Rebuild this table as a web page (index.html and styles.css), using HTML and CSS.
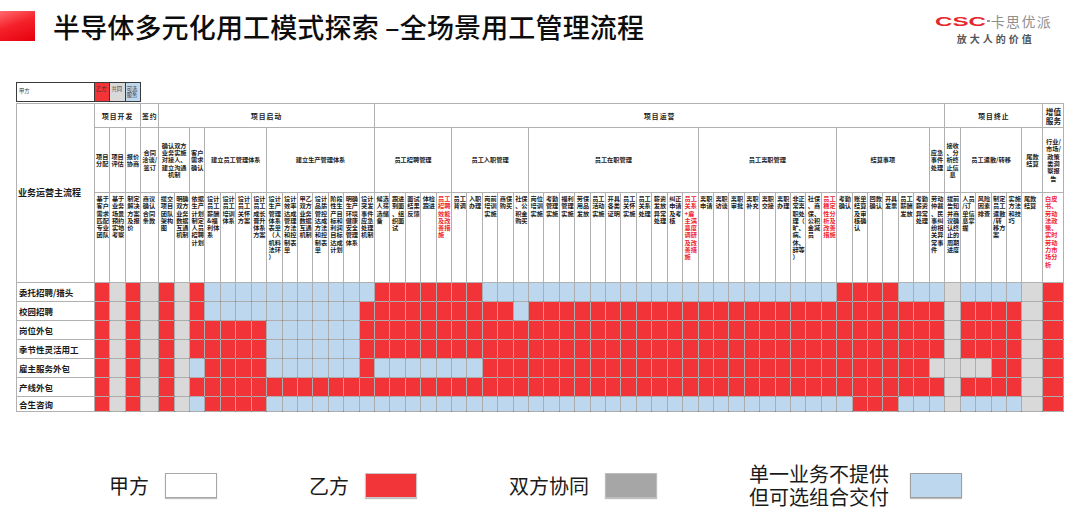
FILE: index.html
```html
<!DOCTYPE html>
<html lang="zh">
<head>
<meta charset="utf-8">
<title>半导体多元化用工模式探索 –全场景用工管理流程</title>
<link rel="stylesheet" href="styles.css">
</head>
<body>
<header class="top">
  <div class="mark"></div>
  <h1 class="title">半导体多元化用工模式探索 –全场景用工管理流程</h1>
  <div class="logo">
    <div class="logo-top">
      <svg class="csc" width="54" height="14" viewBox="0 0 54 14"><text x="0" y="12" textLength="51" lengthAdjust="spacingAndGlyphs">CSC</text></svg>
      <span class="dash"></span>
      <span class="brand">卡思优派</span>
    </div>
    <div class="slogan">放大人的价值</div>
  </div>
</header>

<table class="key">
  <colgroup><col class="k-w"><col class="k-n"><col class="k-n"><col class="k-n"></colgroup>
  <tr><td class="k-a">甲方</td><td class="r">乙方</td><td class="g">共同</td><td class="b">可选服务</td></tr>
</table>

<table class="flow">
  <colgroup>
    <col class="w-label">
    <col span="3" class="w-n">
    <col class="w-sign">
    <col span="56" class="w-n">
    <col span="2" class="w-end">
  </colgroup>
  <tr class="ph">
    <th rowspan="3" class="main">业务运营主流程</th>
    <th colspan="3">项目开发</th>
    <th>签约</th>
    <th colspan="14">项目启动</th>
    <th colspan="37" class="ops">项目运营</th>
    <th colspan="6">项目终止</th>
    <th class="vas">增值服务</th>
  </tr>
  <tr class="grp">
    <th>项目分配</th><th>项目评估</th><th>报价协商</th><th>合同洽谈/签订</th>
    <th colspan="2">确认双方业务实施对接人、建立沟通机制</th>
    <th>客户需求确认</th>
    <th colspan="4">建立员工管理体系</th>
    <th colspan="7">建立生产管理体系</th>
    <th colspan="5">员工招聘管理</th>
    <th colspan="5">员工入职管理</th>
    <th colspan="11">员工在职管理</th>
    <th colspan="9">员工离职管理</th>
    <th colspan="6">结算事项</th>
    <th>应急事件处理</th>
    <th>接收、分析终止信息</th>
    <th colspan="4">员工遣散/转移</th>
    <th>尾款结算</th>
    <th>行业/市场/政策类洞察报告</th>
  </tr>
  <tr class="act">
    <td>基于客户需求匹配专业团队</td>
    <td>基于业务场景预约实地考察</td>
    <td>制定解决方案及报价</td>
    <td>商议确认合同条款</td>
    <td>提交项目团队架构图</td>
    <td>明确双方业务数据互通机制</td>
    <td>依据生产计划制定人员招聘计划</td>
    <td>设计员工薪酬&amp;福利体系</td>
    <td>设计员工培训体系</td>
    <td>设计员工关怀方案</td>
    <td>设计员工成长晋升体系方案</td>
    <td>设计生产管理体系表单（人机料法环）</td>
    <td>设计效率达成管理方法和控制表单</td>
    <td>甲乙双方业务数据互通机制</td>
    <td>设计品质管控达成方法和控制表单</td>
    <td>阶段性生产目标和利润目标达成计划</td>
    <td>明确生产环境健康安全管理体系</td>
    <td>设计突发事件应急处理机制</td>
    <td>候选人筛选储备</td>
    <td>跟进到面、组织面试</td>
    <td>面试结果反馈</td>
    <td>体检跟进</td>
    <td class="hl">员工招聘效能及改善措施</td>
    <td>员工背调</td>
    <td>入职办理</td>
    <td>岗前培训实施</td>
    <td>商保购买</td>
    <td>社保、公积金购买</td>
    <td>岗位培训实施</td>
    <td>考勤管理实施</td>
    <td>福利管理实施</td>
    <td>劳保用品发放</td>
    <td>员工活动实施</td>
    <td>开具各类证明</td>
    <td>员工关怀实施</td>
    <td>员工关系处理</td>
    <td>薪资发放异常处理</td>
    <td>纠正申请及考核</td>
    <td class="hl">员工关系+雇主满意度调研及改善措施</td>
    <td>离职申请</td>
    <td>离职访谈</td>
    <td>离职审批</td>
    <td>离职补充</td>
    <td>离职交接</td>
    <td>离职办理</td>
    <td>非正常离职处理（旷、病、休、辞等）</td>
    <td>社保、商保、公积金减员</td>
    <td class="hl">员工稳定性分析及改善措施</td>
    <td>考勤确认</td>
    <td>账单结算及审核确认</td>
    <td>回款确认</td>
    <td>开具发票</td>
    <td>员工薪酬发放</td>
    <td>考勤薪资异常处理</td>
    <td>劳动仲裁、民事纠纷相关异常事件</td>
    <td>提前告知并商议确认终止的周期进度</td>
    <td>人员/订单信息掌握</td>
    <td>风险因素排查</td>
    <td>制定员工遣散/转移方案</td>
    <td>实施方法和技巧</td>
    <td>尾款结算</td>
    <td class="hl">白皮书、劳动法政策、实时劳动力市场分析</td>
  </tr>

  <tr class="data"><td class="lbl">委托招聘/猎头</td>
<td class=r></td><td class=g></td><td class=r></td><td class=g></td><td class=r></td><td class=g></td><td class=r></td>
<td class=b></td><td class=b></td><td class=b></td><td class=b></td><td class=b></td><td class=b></td><td class=b></td><td class=b></td><td class=b></td><td class=b></td><td class=b></td>
<td class=r></td><td class=r></td><td class=r></td><td class=r></td><td class=r></td><td class=r></td><td class=r></td>
<td class=b></td><td class=b></td><td class=b></td><td class=b></td><td class=b></td><td class=b></td><td class=b></td><td class=b></td><td class=b></td><td class=b></td>
<td class=b></td><td class=b></td><td class=b></td><td class=b></td><td class=b></td><td class=b></td><td class=b></td><td class=b></td><td class=b></td><td class=b></td>
<td class=b></td><td class=b></td><td class=b></td>
<td class=r></td><td class=r></td><td class=r></td><td class=r></td>
<td class=b></td><td class=b></td><td class=b></td>
<td class=g></td>
<td class=b></td><td class=b></td><td class=b></td><td class=b></td>
<td class=g></td>
<td class=r></td>
  </tr>

  <tr class="data"><td class="lbl">校园招聘</td>
<td class=r></td><td class=g></td><td class=r></td><td class=g></td><td class=r></td><td class=g></td><td class=r></td>
<td class=b></td><td class=b></td><td class=b></td><td class=b></td><td class=b></td><td class=b></td><td class=b></td><td class=b></td><td class=b></td><td class=b></td>
<td class=r></td><td class=r></td><td class=r></td><td class=r></td><td class=r></td><td class=r></td><td class=r></td><td class=r></td><td class=r></td><td class=r></td>
<td class=b></td>
<td class=r></td><td class=r></td><td class=r></td><td class=r></td><td class=r></td><td class=r></td><td class=r></td><td class=r></td><td class=r></td><td class=r></td>
<td class=r></td><td class=r></td><td class=r></td><td class=r></td><td class=r></td><td class=r></td><td class=r></td><td class=r></td><td class=r></td><td class=r></td>
<td class=r></td><td class=r></td><td class=r></td><td class=r></td><td class=r></td><td class=r></td><td class=r></td>
<td class=g></td>
<td class=r></td><td class=r></td><td class=r></td><td class=r></td>
<td class=g></td>
<td class=r></td>
  </tr>

  <tr class="data"><td class="lbl">岗位外包</td>
<td class=r></td><td class=g></td><td class=r></td><td class=g></td><td class=r></td><td class=g></td><td class=r></td>
<td class=r></td><td class=r></td><td class=r></td><td class=r></td>
<td class=b></td><td class=b></td><td class=b></td><td class=b></td><td class=b></td><td class=b></td>
<td class=r></td><td class=r></td><td class=r></td><td class=r></td><td class=r></td><td class=r></td><td class=r></td><td class=r></td><td class=r></td><td class=r></td>
<td class=r></td><td class=r></td><td class=r></td><td class=r></td><td class=r></td><td class=r></td><td class=r></td><td class=r></td><td class=r></td><td class=r></td>
<td class=r></td><td class=r></td><td class=r></td><td class=r></td><td class=r></td><td class=r></td><td class=r></td><td class=r></td><td class=r></td><td class=r></td>
<td class=r></td><td class=r></td><td class=r></td><td class=r></td><td class=r></td><td class=r></td><td class=r></td><td class=r></td>
<td class=g></td>
<td class=r></td><td class=r></td><td class=r></td><td class=r></td>
<td class=g></td>
<td class=r></td>
  </tr>

  <tr class="data"><td class="lbl">季节性灵活用工</td>
<td class=r></td><td class=g></td><td class=r></td><td class=g></td><td class=r></td><td class=g></td><td class=r></td>
<td class=r></td><td class=r></td><td class=r></td><td class=r></td>
<td class=b></td><td class=b></td><td class=b></td><td class=b></td><td class=b></td><td class=b></td>
<td class=r></td><td class=r></td><td class=r></td><td class=r></td><td class=r></td><td class=r></td><td class=r></td><td class=r></td><td class=r></td><td class=r></td>
<td class=r></td><td class=r></td><td class=r></td><td class=r></td><td class=r></td><td class=r></td><td class=r></td><td class=r></td><td class=r></td><td class=r></td>
<td class=r></td><td class=r></td><td class=r></td><td class=r></td><td class=r></td><td class=r></td><td class=r></td><td class=r></td><td class=r></td><td class=r></td>
<td class=r></td><td class=r></td><td class=r></td><td class=r></td><td class=r></td><td class=r></td><td class=r></td><td class=r></td>
<td class=g></td>
<td class=r></td><td class=r></td><td class=r></td><td class=r></td>
<td class=g></td>
<td class=r></td>
  </tr>

  <tr class="data"><td class="lbl">雇主服务外包</td>
<td class=r></td><td class=g></td><td class=r></td><td class=g></td><td class=r></td><td class=g></td>
<td class=b></td>
<td class=r></td><td class=r></td><td class=r></td><td class=r></td>
<td class=b></td><td class=b></td><td class=b></td><td class=b></td><td class=b></td><td class=b></td>
<td class=r></td>
<td class=b></td><td class=b></td><td class=b></td><td class=b></td><td class=b></td><td class=b></td><td class=b></td>
<td class=r></td><td class=r></td><td class=r></td><td class=r></td><td class=r></td><td class=r></td><td class=r></td><td class=r></td><td class=r></td><td class=r></td>
<td class=r></td><td class=r></td><td class=r></td><td class=r></td><td class=r></td><td class=r></td><td class=r></td><td class=r></td><td class=r></td><td class=r></td>
<td class=r></td><td class=r></td><td class=r></td><td class=r></td><td class=r></td><td class=r></td><td class=r></td><td class=r></td><td class=r></td>
<td class=g></td><td class=g></td><td class=g></td><td class=g></td>
<td class=r></td><td class=r></td>
<td class=g></td>
<td class=r></td>
  </tr>

  <tr class="data"><td class="lbl">产线外包</td>
<td class=r></td><td class=g></td><td class=r></td><td class=g></td><td class=r></td><td class=g></td>
<td class=r></td><td class=r></td><td class=r></td><td class=r></td><td class=r></td><td class=r></td><td class=r></td><td class=r></td><td class=r></td><td class=r></td>
<td class=r></td><td class=r></td><td class=r></td><td class=r></td><td class=r></td><td class=r></td><td class=r></td><td class=r></td><td class=r></td><td class=r></td>
<td class=r></td><td class=r></td><td class=r></td><td class=r></td><td class=r></td><td class=r></td><td class=r></td><td class=r></td><td class=r></td><td class=r></td>
<td class=r></td><td class=r></td><td class=r></td><td class=r></td><td class=r></td><td class=r></td><td class=r></td><td class=r></td><td class=r></td><td class=r></td>
<td class=r></td><td class=r></td><td class=r></td><td class=r></td><td class=r></td><td class=r></td><td class=r></td><td class=r></td><td class=r></td>
<td class=g></td>
<td class=r></td><td class=r></td><td class=r></td><td class=r></td>
<td class=g></td>
<td class=r></td>
  </tr>

  <tr class="data last"><td class="lbl">合生咨询</td>
<td class=r></td><td class=g></td><td class=r></td><td class=g></td><td class=r></td><td class=g></td>
<td class=b></td>
<td class=r></td><td class=r></td><td class=r></td><td class=r></td>
<td class=b></td><td class=b></td><td class=b></td><td class=b></td><td class=b></td><td class=b></td><td class=b></td><td class=b></td><td class=b></td><td class=b></td>
<td class=b></td><td class=b></td><td class=b></td><td class=b></td><td class=b></td><td class=b></td><td class=b></td><td class=b></td><td class=b></td><td class=b></td>
<td class=b></td><td class=b></td><td class=b></td><td class=b></td><td class=b></td><td class=b></td><td class=b></td><td class=b></td><td class=b></td><td class=b></td>
<td class=b></td><td class=b></td><td class=b></td><td class=b></td><td class=b></td><td class=b></td><td class=b></td><td class=b></td>
<td class=r></td><td class=r></td><td class=r></td>
<td class=b></td><td class=b></td><td class=b></td>
<td class=g></td>
<td class=b></td><td class=b></td><td class=b></td><td class=b></td>
<td class=g></td>
<td class=r></td>
  </tr>
</table>

<div class="legend">
  <div class="item"><span class="lt">甲方</span><i class="sw sw-white"></i></div>
  <div class="item"><span class="lt">乙方</span><i class="sw sw-red"></i></div>
  <div class="item"><span class="lt">双方协同</span><i class="sw sw-gray"></i></div>
  <div class="item item-wide">
    <div class="lt-two"><span class="lt">单一业务不提供</span><span class="lt">但可选组合交付</span></div>
    <i class="sw sw-blue"></i>
  </div>
</div>
</body>
</html>
```
FILE: styles.css
```css
* { box-sizing: border-box; margin: 0; padding: 0; }

body {
  width: 1080px;
  height: 522px;
  overflow: hidden;
  background: #fff;
  font-family: "Noto Sans CJK SC", "Noto Sans", sans-serif;
  color: #111;
}

/* ---------- header ---------- */
.top {
  display: flex;
  align-items: flex-start;
  height: 82px;
  padding-top: 11px;
}
.mark {
  width: 35px;
  height: 30px;
  background: linear-gradient(160deg, #ff6a6e 0%, #f5212a 45%, #e4000c 100%);
}
.title {
  margin-left: 18px;
  font-size: 27px;
  line-height: 31px;
  font-weight: 500;
  color: #0d0d0d;
  letter-spacing: 0.15px;
}
.logo {
  margin-left: auto;
  margin-right: 28px;
  margin-top: 2px;
  display: flex;
  flex-direction: column;
  align-items: flex-start;
}
.logo-top {
  display: flex;
  align-items: center;
  height: 16px;
}
.csc { display: block; }
.csc text {
  font-family: "Liberation Sans", Arial, sans-serif;
  font-weight: 700;
  font-size: 13px;
  fill: #e5262d;
}
.dash {
  width: 3px;
  height: 2px;
  background: #9a9a9a;
  margin: 0 1px 0 -2px;
}
.brand {
  font-size: 14px;
  line-height: 16px;
  color: #8f8f8f;
  letter-spacing: 1.3px;
}
.slogan {
  margin-top: 4px;
  margin-left: 22px;
  font-size: 10px;
  line-height: 11px;
  color: #555;
  letter-spacing: 3px;
  font-weight: 700;
}

/* ---------- key row ---------- */
.key {
  margin-left: 16px;
  border-collapse: collapse;
  table-layout: fixed;
  width: 124px;
}
.k-w { width: 78px; }
.k-n { width: 15.4px; }
.key td {
  height: 19px;
  border: 1px solid #3a3a3a;
  font-size: 5.3px;
  line-height: 6px;
  vertical-align: top;
  padding: 3px 0 0 1px;
  color: #333;
}
.key .k-a { padding: 5px 0 0 2px; }

/* ---------- flow table ---------- */
.flow {
  margin: 1px 0 0 16px;
  width: 1047px;
  table-layout: fixed;
  border-collapse: collapse;
  color: #1b1b1b;
  font-weight: 700;
  border: 1px solid #8e8e8e;
}
.w-label { width: 78px; }
.w-n { width: 15.41px; }
.w-sign { width: 18px; }
.w-end { width: 21px; }

.flow th,
.flow td {
  border: 1px solid #b1b1b1;
  padding: 0;
  overflow: hidden;
}

.ph th {
  height: 24px;
  font-size: 6.8px;
  line-height: 8px;
  text-align: center;
  vertical-align: middle;
  letter-spacing: 1px;
}
.ph .main {
  text-align: left;
  font-size: 9px;
  letter-spacing: 0;
  padding-left: 1px;
}
.ph .vas {
  font-size: 7.6px;
  line-height: 9px;
  letter-spacing: 0;
}

.grp th {
  height: 65px;
  font-size: 6.2px;
  line-height: 7.3px;
  text-align: center;
  vertical-align: middle;
  padding: 0 1px;
  word-break: break-all;
  line-break: anywhere;
}

.act td {
  height: 90px;
  font-size: 6.2px;
  line-height: 7.3px;
  vertical-align: top;
  text-align: left;
  padding: 2px 0 0 1.5px;
  word-break: break-all;
  line-break: anywhere;
}
.act .hl { color: #f0262d; }

.data td {
  height: 19px;
  border-color: rgba(60, 60, 60, 0.42);
}
.data.last td { height: 15px; }
.data .lbl {
  background: #fff;
  border-color: #b1b1b1;
  font-size: 8.5px;
  padding-left: 2px;
  white-space: nowrap;
}

.r { background: #f23439; }
.g { background: #d9d9d9; }
.b { background: #bdd7ee; }

/* ---------- legend ---------- */
.legend {
  display: flex;
  align-items: center;
  gap: 92px;
  padding-left: 109px;
  margin-top: 50px;
  height: 46px;
}
.item {
  display: flex;
  align-items: center;
  gap: 16px;
}
.item-wide { gap: 21px; }
.lt {
  display: block;
  font-size: 20px;
  line-height: 23px;
  color: #1a1a1a;
}
.lt-two {
  display: flex;
  flex-direction: column;
}
.sw {
  display: block;
  width: 52px;
  height: 25px;
  border: 1px solid #a8a8a8;
  box-shadow: 0 1px 1px rgba(0, 0, 0, 0.25);
}
.sw-white { background: #fff; }
.sw-red { background: #f23538; border-color: #c9c9c9; }
.sw-gray { background: #a6a6a6; border-color: #bdbdbd; }
.sw-blue { background: #bdd7ee; border-color: #9e9e9e; }
```
